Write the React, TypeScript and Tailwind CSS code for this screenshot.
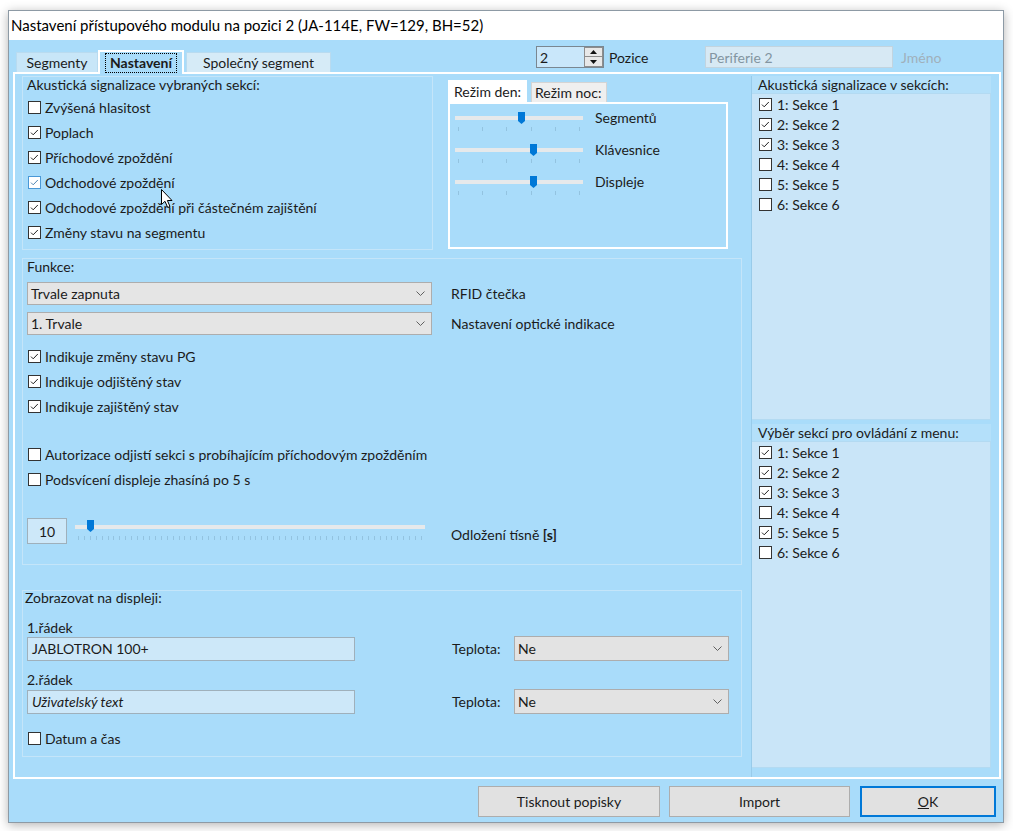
import React from "react";

const Check = ({ checked, hover }: { checked?: boolean; hover?: boolean }) => (
  <span
    className={`flex h-[13px] w-[13px] shrink-0 items-center justify-center border bg-white ${
      hover ? "border-[#4a98d6]" : "border-[#333333]"
    }`}
  >
    {checked && (
      <svg width="11" height="11" viewBox="0 0 11 11" className="block">
        <path d="M2 5.6 L4.2 7.8 L8.8 3" stroke={hover ? "#4f86b3" : "#222222"} strokeWidth="1" fill="none" />
      </svg>
    )}
  </span>
);

const CheckRow = ({ label, checked, hover }: { label: React.ReactNode; checked?: boolean; hover?: boolean }) => (
  <div className="flex h-[25px] items-center pl-[1px]">
    <Check checked={checked} hover={hover} />
    <span className="ml-[4px] whitespace-nowrap">{label}</span>
  </div>
);

const ListRow = ({ label, checked }: { label: string; checked?: boolean }) => (
  <div className="flex h-[20px] items-center">
    <Check checked={checked} />
    <span className="ml-[5px] whitespace-nowrap">{label}</span>
  </div>
);

const Chevron = () => (
  <svg width="9" height="5" viewBox="0 0 9 5" className="block">
    <path d="M0.5 0.5 L4.5 4.5 L8.5 0.5" stroke="#606060" strokeWidth="1" fill="none" />
  </svg>
);

const Slider = ({
  w,
  pos,
  ticks,
  trackTop,
  thumbTop,
  tickTop,
}: {
  w: number;
  pos: number;
  ticks: number;
  trackTop: number;
  thumbTop: number;
  tickTop: number;
}) => {
  const xs: number[] = [];
  for (let i = 0; i < ticks; i++) xs.push(Math.round(3 + (i * (w - 7)) / (ticks - 1)) + 0.5);
  return (
    <div className="relative h-full shrink-0" style={{ width: w }}>
      <div className="absolute left-0 right-0 h-[4px] bg-[#e6e9eb]" style={{ top: trackTop }} />
      <svg className="absolute left-0" style={{ top: tickTop }} width={w} height="4">
        {xs.map((x, i) => (
          <line key={i} x1={x} x2={x} y1="0" y2="4" stroke="#93c3e0" strokeWidth="1" />
        ))}
      </svg>
      <svg className="absolute" style={{ left: pos - 3, top: thumbTop }} width="7" height="12" viewBox="0 0 7 12">
        <path d="M0 0 H7 V9 L3.5 12 L0 9 Z" fill="#0078d7" />
      </svg>
    </div>
  );
};

export default function App() {
  return (
    <div className="relative h-[831px] w-[1013px] overflow-hidden bg-white pl-[8px] pt-[10px] font-['Lato'] text-[14px] text-[#1b1b1b]">
      <div className="flex h-[813px] w-[996px] flex-col border border-[#8d9aa5] shadow-[0_2px_10px_rgba(0,0,0,0.3)]">
        {/* title bar */}
        <div className="flex h-[29px] shrink-0 items-center bg-white pl-[2px] text-[15px] text-black">
          Nastavení přístupového modulu na pozici 2 (JA-114E, FW=129, BH=52)
        </div>

        <div className="flex flex-1 flex-col bg-[#a9dcfa]">
          {/* top strip */}
          <div className="flex h-[32px] shrink-0">
            <div className="flex items-end pl-[7px]">
              <div className="flex h-[20px] w-[82px] items-center justify-center border border-b-0 border-[#b9dbf0] bg-[#c8e6f8]">
                Segmenty
              </div>
              <div className="relative z-10 -mb-[2px] flex h-[24px] w-[86px] items-start justify-center border-2 border-b-0 border-white bg-[#a9dcfa] pt-[1px]">
                <span className="border border-dotted border-black px-[4px] font-bold leading-[18px]">Nastavení</span>
              </div>
              <div className="ml-[2px] flex h-[20px] w-[145px] items-center justify-center border border-b-0 border-[#b9dbf0] bg-[#d6ebf7]">
                Společný segment
              </div>
            </div>
            <div className="ml-[205px] mt-[6px] flex h-[22px] items-center">
              <div className="flex h-[22px] w-[68px] border border-[#7a8791] bg-[#c9e7fa]">
                <div className="flex flex-1 items-center pl-[3px]">2</div>
                <div className="flex w-[19px] flex-col">
                  <div className="flex h-[10px] items-center justify-center border border-[#8d8d8d] bg-[#e8e8e8]">
                    <svg width="7" height="4" viewBox="0 0 7 4">
                      <path d="M0 4 L3.5 0 L7 4 Z" fill="#111" />
                    </svg>
                  </div>
                  <div className="flex h-[10px] items-center justify-center border border-t-0 border-[#8d8d8d] bg-[#e8e8e8]">
                    <svg width="7" height="4" viewBox="0 0 7 4">
                      <path d="M0 0 L3.5 4 L7 0 Z" fill="#111" />
                    </svg>
                  </div>
                </div>
              </div>
              <span className="ml-[5px] w-[96px]">Pozice</span>
              <div className="flex h-[22px] w-[188px] items-center border border-[#c2d4df] bg-[#d7e9f4] pl-[3px] text-[#8395a1]">
                Periferie 2
              </div>
              <span className="ml-[8px] text-[#a0b0bb]">Jméno</span>
            </div>
          </div>

          {/* tab panel */}
          <div className="ml-[4px] flex h-[707px] w-[988px] shrink-0 gap-[9px] border-2 border-white pl-[7px] pt-[2px]">
            {/* left column */}
            <div className="flex w-[720px] flex-col">
              <div className="flex h-[176px]">
                {/* Akusticka group */}
                <div className="h-[174px] w-[411px] border border-[#c4e5f9] pl-[4px]">
                  <div className="flex h-[14px] items-center">Akustická signalizace vybraných sekcí:</div>
                  <div className="mt-[4px]">
                    <CheckRow label="Zvýšená hlasitost" />
                    <CheckRow label="Poplach" checked />
                    <CheckRow label="Příchodové zpoždění" checked />
                    <CheckRow label="Odchodové zpoždění" checked hover />
                    <CheckRow label="Odchodové zpoždění při částečném zajištění" checked />
                    <CheckRow label="Změny stavu na segmentu" checked />
                  </div>
                </div>
                {/* Rezim tab control */}
                <div className="ml-[15px] mt-[4px] flex w-[282px] flex-col">
                  <div className="flex h-[22px] items-end">
                    <div className="flex h-[22px] w-[79px] items-center bg-white pl-[6px]">Režim den:</div>
                    <div className="ml-[4px] flex h-[20px] w-[76px] items-center border border-b-0 border-[#d4d4d4] bg-[#efefef] pl-[3px]">
                      Režim noc:
                    </div>
                  </div>
                  <div className="h-[147px] w-[280px] border-2 border-white pl-[5px]">
                    {[
                      { l: "Segmentů", p: 66 },
                      { l: "Klávesnice", p: 78 },
                      { l: "Displeje", p: 78 },
                    ].map((s) => (
                      <div key={s.l} className="flex h-[32px] items-start">
                        <Slider w={128} pos={s.p} ticks={6} trackTop={12} thumbTop={8} tickTop={23} />
                        <span className="ml-[12px] mt-[6px] leading-[16px]">{s.l}</span>
                      </div>
                    ))}
                  </div>
                </div>
              </div>

              {/* Funkce group */}
              <div className="mt-[6px] h-[307px] w-[720px] border border-[#c4e5f9] pl-[4px]">
                <div className="flex h-[14px] items-center">Funkce:</div>
                <div className="mt-[9px] flex h-[23px] items-center">
                  <div className="flex h-[23px] w-[405px] items-center justify-between border border-[#adadad] bg-[#e5e5e5] pl-[3px] pr-[6px]">
                    <span>Trvale zapnuta</span>
                    <Chevron />
                  </div>
                  <span className="ml-[19px]">RFID čtečka</span>
                </div>
                <div className="mt-[7px] flex h-[23px] items-center">
                  <div className="flex h-[23px] w-[405px] items-center justify-between border border-[#adadad] bg-[#e5e5e5] pl-[3px] pr-[6px]">
                    <span>1. Trvale</span>
                    <Chevron />
                  </div>
                  <span className="ml-[19px]">Nastavení optické indikace</span>
                </div>
                <div className="mt-[9px]">
                  <CheckRow label="Indikuje změny stavu PG" checked />
                  <CheckRow label="Indikuje odjištěný stav" checked />
                  <CheckRow label="Indikuje zajištěný stav" checked />
                </div>
                <div className="mt-[23px]">
                  <CheckRow label="Autorizace odjistí sekci s probíhajícím příchodovým zpožděním" />
                  <CheckRow label="Podsvícení displeje zhasíná po 5 s" />
                </div>
                <div className="mt-[26px] flex h-[26px] items-start">
                  <div className="flex h-[26px] w-[40px] items-center justify-center border border-[#9fb0bb] bg-[#cde8f9]">
                    10
                  </div>
                  <div className="ml-[8px] h-[26px]">
                    <Slider w={350} pos={15} ticks={59} trackTop={7} thumbTop={2} tickTop={18} />
                  </div>
                  <span className="ml-[26px] mt-[9px] leading-[16px]">
                    Odložení tísně <b>[s]</b>
                  </span>
                </div>
              </div>

              {/* Zobrazovat group */}
              <div className="mt-[25px] h-[167px] w-[720px] border border-[#c4e5f9] pl-[4px]">
                <div className="-ml-[2px] flex h-[12px] items-center">Zobrazovat na displeji:</div>
                <div className="mt-[16px] flex h-[16px] items-center">1.řádek</div>
                <div className="mt-[1px] flex h-[25px] items-center">
                  <div className="flex h-[24px] w-[328px] items-center border border-[#9fb0bb] bg-[#cde8f9] pl-[4px]">
                    JABLOTRON 100+
                  </div>
                  <span className="ml-[97px] w-[62px]">Teplota:</span>
                  <div className="flex h-[25px] w-[215px] items-center justify-between border border-[#adadad] bg-[#e3e3e3] pl-[3px] pr-[6px]">
                    <span>Ne</span>
                    <Chevron />
                  </div>
                </div>
                <div className="mt-[10px] flex h-[16px] items-center">2.řádek</div>
                <div className="mt-[2px] flex h-[25px] items-center">
                  <div className="flex h-[24px] w-[328px] items-center border border-[#9fb0bb] bg-[#cde8f9] pl-[4px] italic">
                    Uživatelský text
                  </div>
                  <span className="ml-[97px] w-[62px]">Teplota:</span>
                  <div className="flex h-[25px] w-[215px] items-center justify-between border border-[#adadad] bg-[#e3e3e3] pl-[3px] pr-[6px]">
                    <span>Ne</span>
                    <Chevron />
                  </div>
                </div>
                <div className="mt-[14px] flex h-[20px] items-center pl-[1px]">
                  <Check />
                  <span className="ml-[4px]">Datum a čas</span>
                </div>
              </div>
            </div>

            {/* right column */}
            <div className="flex w-[240px] flex-col border-l border-[#98cbea]">
              <div className="flex h-[17px] items-center bg-[#b4e0fa] pl-[6px]">Akustická signalizace v sekcích:</div>
              <div className="h-[327px] border border-l-0 border-[#b3daf2] bg-[#c9e5f8] pl-[7px]">
                <ListRow label="1: Sekce 1" checked />
                <ListRow label="2: Sekce 2" checked />
                <ListRow label="3: Sekce 3" checked />
                <ListRow label="4: Sekce 4" />
                <ListRow label="5: Sekce 5" />
                <ListRow label="6: Sekce 6" />
              </div>
              <div className="h-[4px]" />
              <div className="flex h-[17px] items-center bg-[#b4e0fa] pl-[6px]">Výběr sekcí pro ovládání z menu:</div>
              <div className="h-[327px] border border-l-0 border-[#b3daf2] bg-[#c9e5f8] pl-[7px]">
                <ListRow label="1: Sekce 1" checked />
                <ListRow label="2: Sekce 2" checked />
                <ListRow label="3: Sekce 3" checked />
                <ListRow label="4: Sekce 4" />
                <ListRow label="5: Sekce 5" checked />
                <ListRow label="6: Sekce 6" />
              </div>
            </div>
          </div>

          {/* buttons */}
          <div className="mt-[7px] flex justify-end pr-[7px]">
            <div className="flex h-[31px] w-[182px] items-center justify-center border border-[#adadad] bg-[#e1e1e1]">
              Tisknout popisky
            </div>
            <div className="ml-[9px] flex h-[31px] w-[181px] items-center justify-center border border-[#adadad] bg-[#e1e1e1]">
              Import
            </div>
            <div className="ml-[10px] flex h-[31px] w-[136px] items-center justify-center border-2 border-[#0078d7] bg-[#e1e1e1]">
              <span className="underline">O</span>K
            </div>
          </div>
        </div>
      </div>

      {/* mouse cursor */}
      <svg className="absolute left-[161px] top-[189px]" width="13" height="20" viewBox="0 0 13 20">
        <path d="M0.5 0.5 L0.5 15.5 L4 12.3 L6.7 18.5 L9 17.5 L6.4 11.5 L11 11.5 Z" fill="#ffffff" stroke="#000000" strokeWidth="1" />
      </svg>
    </div>
  );
}
